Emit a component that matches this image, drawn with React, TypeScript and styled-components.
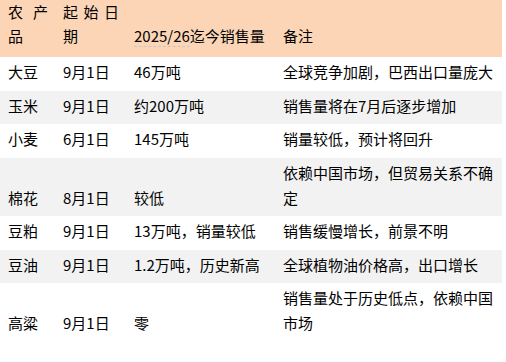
import styled, { createGlobalStyle } from 'styled-components';

const GlobalStyle = createGlobalStyle`
  body {
    margin: 0;
    background-color: #ffffff;
    font-family: "Noto Sans CJK SC", "Noto Sans", sans-serif;
    color: #000000;
  }
`;

const SalesTable = styled.table`
  width: 502px;
  border-collapse: collapse;
  table-layout: fixed;
  font-size: 15px;
  line-height: 25px;
`;

const HeadRow = styled.tr`
  background-color: #fbd5b5;
`;

const HeadCell = styled.th`
  padding: 0 7px 9px 8px;
  font-weight: normal;
  text-align: justify;
  vertical-align: bottom;
  line-height: 24px;
  white-space: ${(props: { nowrap?: boolean }) => (props.nowrap ? 'nowrap' : 'normal')};
`;

const Row = styled.tr<{ shaded: boolean }>`
  background-color: ${(props) => (props.shaded ? '#f2f2f2' : '#ffffff')};
`;

const Cell = styled.td<{ extra?: number }>`
  padding: 2px 7px ${(props) => 6.5 + (props.extra || 0)}px 8px;
  vertical-align: bottom;
  text-align: left;
`;

const NoteCell = styled(Cell)`
  vertical-align: top;
`;

const Marked = styled.span`
  border-bottom: 1px dashed #c8c8c8;
`;

interface ICrop {
  name: string;
  start: string;
  sales: string;
  note: string;
  extra?: number;
}

const crops: ICrop[] = [
  { name: '大豆', start: '9月1日', sales: '46万吨', note: '全球竞争加剧，巴西出口量庞大' },
  { name: '玉米', start: '9月1日', sales: '约200万吨', note: '销售量将在7月后逐步增加' },
  { name: '小麦', start: '6月1日', sales: '145万吨', note: '销量较低，预计将回升' },
  { name: '棉花', start: '8月1日', sales: '较低', note: '依赖中国市场，但贸易关系不确定' },
  { name: '豆粕', start: '9月1日', sales: '13万吨，销量较低', note: '销售缓慢增长，前景不明' },
  { name: '豆油', start: '9月1日', sales: '1.2万吨，历史新高', note: '全球植物油价格高，出口增长' },
  { name: '高粱', start: '9月1日', sales: '零', note: '销售量处于历史低点，依赖中国市场', extra: 13 },
];

function App() {
  return (
    <>
      <GlobalStyle />
      <SalesTable>
        <colgroup>
          <col style={{ width: 55 }} />
          <col style={{ width: 71 }} />
          <col style={{ width: 149 }} />
          <col style={{ width: 227 }} />
        </colgroup>
        <thead>
          <HeadRow>
            <HeadCell>农产品</HeadCell>
            <HeadCell>起始日期</HeadCell>
            <HeadCell nowrap>
              <Marked>2025/26</Marked>迄今销售量
            </HeadCell>
            <HeadCell>备注</HeadCell>
          </HeadRow>
        </thead>
        <tbody>
          {crops.map((crop, i) => (
            <Row key={crop.name} shaded={i % 2 === 1}>
              <Cell extra={crop.extra}>{crop.name}</Cell>
              <Cell extra={crop.extra}>{crop.start}</Cell>
              <Cell extra={crop.extra}>{crop.sales}</Cell>
              <NoteCell extra={crop.extra}>{crop.note}</NoteCell>
            </Row>
          ))}
        </tbody>
      </SalesTable>
    </>
  );
}

export default App;
